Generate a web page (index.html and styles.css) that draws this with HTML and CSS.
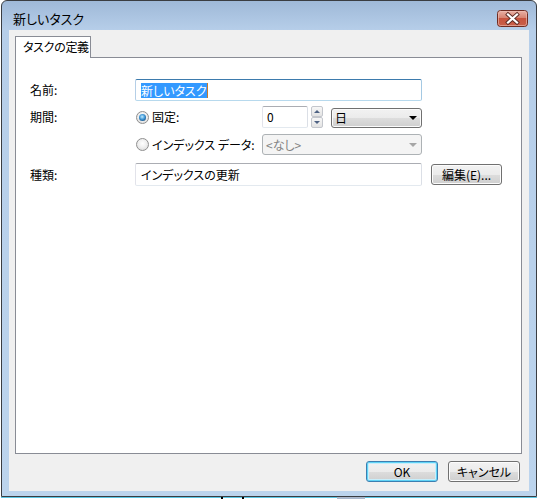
FILE: index.html
```html
<!DOCTYPE html>
<html lang="ja">
<head>
<meta charset="utf-8">
<title>新しいタスク</title>
<link rel="stylesheet" href="styles.css">
</head>
<body>
<div class="window">
  <div class="titlebar">
    <span class="title">新しいタスク</span>
    <div class="close">
      <svg width="31" height="17" viewBox="0 0 31 17">
        <defs>
          <linearGradient id="cg" x1="0" y1="0" x2="0" y2="1">
            <stop offset="0" stop-color="#e9b3a8"/>
            <stop offset="0.45" stop-color="#d88573"/>
            <stop offset="0.5" stop-color="#c7543f"/>
            <stop offset="1" stop-color="#c9604a"/>
          </linearGradient>
        </defs>
        <rect x="0.5" y="0.5" width="30" height="16" rx="3" fill="url(#cg)" stroke="#6f2c22"/>
        <rect x="1.5" y="1.5" width="28" height="14" rx="2" fill="none" stroke="#eec2b8" stroke-opacity="0.6"/>
        <path d="M11 4.5 L20 12.5 M20 4.5 L11 12.5" stroke="#5a2a24" stroke-width="4" stroke-linecap="square"/>
        <path d="M11 4.5 L20 12.5 M20 4.5 L11 12.5" stroke="#ffffff" stroke-width="2.2" stroke-linecap="square"/>
      </svg>
    </div>
  </div>
  <div class="client">
    <div class="tabs">
      <div class="tab">タスクの定義</div>
    </div>
    <div class="panel">
      <div class="row r1">
        <span class="lbl">名前:</span>
        <div class="textbox focus wide"><span class="sel">新しいタスク</span><span class="caret"></span></div>
      </div>
      <div class="row r2">
        <span class="lbl">期間:</span>
        <div class="radio-cell"><span class="radio checked"></span><span>固定:</span></div>
        <div class="textbox spin">0</div>
        <div class="spinbtns">
          <div class="sb up"><span class="tri-up"></span></div>
          <div class="sb down"><span class="tri-down"></span></div>
        </div>
        <div class="combo"><span>日</span><span class="arrow"></span></div>
      </div>
      <div class="row r3">
        <span class="lbl"></span>
        <div class="radio-cell"><span class="radio"></span><span>インデックス データ:</span></div>
        <div class="combo disabled"><span>&lt;なし&gt;</span><span class="arrow"></span></div>
      </div>
      <div class="row r4">
        <span class="lbl">種類:</span>
        <div class="textbox wide">インデックスの更新</div>
        <button class="btn edit">編集(E)...</button>
      </div>
    </div>
    <div class="footer">
      <button class="btn default">OK</button>
      <button class="btn">キャンセル</button>
    </div>
  </div>
</div>
<div class="below">
  <span class="mark m1"></span>
  <span class="mark m2"></span>
  <span class="chip"></span>
</div>
</body>
</html>
```

FILE: styles.css
```css
body {
  margin: 0;
  background: #ffffff;
  font-family: "Noto Sans CJK JP", "Noto Sans", sans-serif;
  font-size: 12px;
  font-feature-settings: "palt";
  color: #000;
  white-space: nowrap;
}

.window {
  margin-left: 1px;
  width: 536px;
  height: 497px;
  box-sizing: border-box;
  border: 1px solid #3a3d42;
  border-radius: 6px 6px 0 0;
  background: linear-gradient(#9fb9d8 0, #b6cee9 29px, #bcd4ed 100%);
  padding: 0 7px 5px 7px;
  box-shadow: 0 1px 0 #5cc6e4;
  display: flex;
  flex-direction: column;
}

.titlebar {
  height: 29px;
  display: flex;
  align-items: flex-start;
}

.title {
  margin-top: 10px;
  padding-left: 4px;
  font-size: 13px;
  line-height: 16px;
}

.close {
  margin-left: auto;
  margin-right: 1px;
  margin-top: 9px;
  width: 31px;
  height: 17px;
}

.close svg {
  display: block;
}

.client {
  flex: 1;
  background: #f0f0f0;
  padding: 6px 0 0 6px;
  display: flex;
  flex-direction: column;
}

.tabs {
  display: flex;
  height: 22px;
  margin-bottom: -1px;
  position: relative;
  z-index: 1;
}

.tab {
  width: 76px;
  height: 22px;
  box-sizing: border-box;
  border: 1px solid #898c95;
  border-bottom: none;
  background: #ffffff;
  padding-left: 7px;
  line-height: 20px;
  letter-spacing: -0.3px;
  overflow: hidden;
}

.panel {
  width: 507px;
  height: 397px;
  box-sizing: border-box;
  border: 1px solid #898c95;
  background: #ffffff;
  padding: 21px 0 0 14px;
  display: flex;
  flex-direction: column;
}

.row {
  display: flex;
  align-items: center;
}

.r1 { height: 22px; }
.r2 { height: 22px; margin-top: 5px; }
.r3 { height: 21px; margin-top: 6px; }
.r4 { height: 23px; margin-top: 8px; }

.lbl {
  width: 105px;
  flex: none;
  line-height: 16px;
}

.textbox {
  box-sizing: border-box;
  height: 22px;
  border: 1px solid;
  border-color: #abadb3 #dbdfe6 #e3e9ef #e2e3ea;
  border-radius: 2px;
  background: #fff;
  padding-left: 5px;
  line-height: 20px;
  display: flex;
  align-items: center;
}

.wide { width: 287px; }
.r4 .textbox { height: 23px; }

.focus {
  border-color: #3d7bad #a4c9e3 #b7d9ed #b5cfe7;
}

.sel {
  background: #3399ff;
  color: #fff;
  line-height: 15px;
}

.caret {
  width: 1px;
  height: 15px;
  background: #c87a2a;
}

.radio-cell {
  width: 127px;
  flex: none;
  display: flex;
  align-items: center;
  gap: 3px;
  line-height: 16px;
}

.radio {
  margin-left: 1px;
  width: 13px;
  height: 13px;
  box-sizing: border-box;
  border-radius: 50%;
  border: 1px solid #8f8f8f;
  background: radial-gradient(circle at 50% 40%, #ffffff 0, #f0f0f0 45%, #d5d5d5 100%);
  display: flex;
  align-items: center;
  justify-content: center;
}

.radio.checked::after {
  content: "";
  width: 7px;
  height: 7px;
  border-radius: 50%;
  background: radial-gradient(circle at 45% 40%, #c3ecff 0, #3f97d6 45%, #0b3c6c 90%);
}

.spin {
  width: 46px;
  padding-left: 4px;
}

.spinbtns {
  margin-left: 3px;
  width: 12px;
  height: 22px;
  display: flex;
  flex-direction: column;
  gap: 0;
}

.sb {
  flex: 1;
  box-sizing: border-box;
  border: 1px solid #c3c6cc;
  border-radius: 2px;
  background: linear-gradient(#f7f7f7, #e3e3e3);
  display: flex;
  align-items: center;
  justify-content: center;
}

.tri-up {
  width: 0;
  height: 0;
  border-left: 3px solid transparent;
  border-right: 3px solid transparent;
  border-bottom: 3px solid #4e6283;
}

.tri-down {
  width: 0;
  height: 0;
  border-left: 3px solid transparent;
  border-right: 3px solid transparent;
  border-top: 3px solid #4e6283;
}

.combo {
  margin-left: 8px;
  width: 91px;
  height: 20px;
  align-self: flex-end;
  box-sizing: border-box;
  border: 1px solid #707070;
  border-radius: 3px;
  background: linear-gradient(#f2f2f2 0, #ebebeb 50%, #dddddd 50%, #cfcfcf 100%);
  box-shadow: inset 0 0 0 1px #fbfbfb;
  padding: 0 4px 0 3px;
  display: flex;
  align-items: center;
  justify-content: space-between;
  line-height: 16px;
}

.arrow {
  width: 0;
  height: 0;
  border-left: 4px solid transparent;
  border-right: 4px solid transparent;
  border-top: 4px solid #000;
}

.combo.disabled {
  margin-left: 0;
  width: 160px;
  height: 21px;
  align-self: center;
  border-color: #adb2b5;
  background: #f4f4f4;
  box-shadow: none;
  color: #838383;
}

.combo.disabled .arrow {
  border-top-color: #a6a6a6;
}

.btn {
  box-sizing: border-box;
  height: 21px;
  border: 1px solid #707070;
  border-radius: 3px;
  background: linear-gradient(#f2f2f2 0, #ebebeb 50%, #dddddd 50%, #cfcfcf 100%);
  box-shadow: inset 0 0 0 1px #fcfcfc;
  font: inherit;
  font-feature-settings: "palt";
  color: #000;
  padding: 0;
  line-height: 17px;
}

.edit {
  margin-left: 9px;
  width: 71px;
}

.footer {
  margin-top: 7px;
  padding-right: 9px;
  display: flex;
  justify-content: flex-end;
  gap: 10px;
}

.footer .btn {
  width: 72px;
}

.btn.default {
  border-color: #3c7fb1;
  box-shadow: inset 0 0 0 1px #5fd3f6, inset 0 0 0 2px #c8eefb;
}

.below {
  height: 2px;
  display: flex;
}

.mark {
  width: 2px;
  height: 2px;
  background: #000;
}

.m1 { margin-left: 221px; }
.m2 { margin-left: 19px; }

.chip {
  margin-left: 93px;
  width: 28px;
  height: 2px;
  background: #aab8cc;
}
```
